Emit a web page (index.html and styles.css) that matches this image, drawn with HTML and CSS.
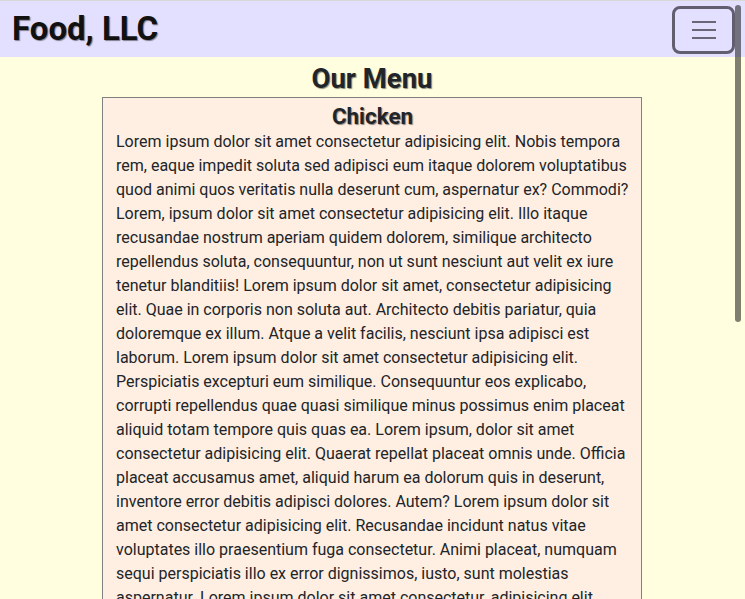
FILE: index.html
```html
<!DOCTYPE html>
<html lang="en">
<head>
<meta charset="utf-8">
<title>Food, LLC</title>
<link rel="stylesheet" href="styles.css">
</head>
<body>
<header class="navbar">
  <h1 class="brand">Food, LLC</h1>
  <button class="toggler" type="button" aria-label="Toggle navigation">
    <svg class="toggler-icon" width="24" height="20" viewBox="0 0 24 20">
      <path d="M0 2h24M0 10h24M0 18h24" stroke="#6b6778" stroke-width="2" fill="none"/>
    </svg>
  </button>
</header>
<main class="menu">
  <h2 class="menu-title">Our Menu</h2>
  <section class="card">
    <h3 class="card-title">Chicken</h3>
    <p class="card-text">Lorem ipsum dolor sit amet consectetur adipisicing elit. Nobis tempora rem, eaque impedit soluta sed adipisci eum itaque dolorem voluptatibus quod animi quos veritatis nulla deserunt cum, aspernatur ex? Commodi? Lorem, ipsum dolor sit amet consectetur adipisicing elit. Illo itaque recusandae nostrum aperiam quidem dolorem, similique architecto repellendus soluta, consequuntur, non ut sunt nesciunt aut velit ex iure tenetur blanditiis! Lorem ipsum dolor sit amet, consectetur adipisicing elit. Quae in corporis non soluta aut. Architecto debitis pariatur, quia doloremque ex illum. Atque a velit facilis, nesciunt ipsa adipisci est laborum. Lorem ipsum dolor sit amet consectetur adipisicing elit. Perspiciatis excepturi eum similique. Consequuntur eos explicabo, corrupti repellendus quae quasi similique minus possimus enim placeat aliquid totam tempore quis quas ea. Lorem ipsum, dolor sit amet consectetur adipisicing elit. Quaerat repellat placeat omnis unde. Officia placeat accusamus amet, aliquid harum ea dolorum quis in deserunt, inventore error debitis adipisci dolores. Autem? Lorem ipsum dolor sit amet consectetur adipisicing elit. Recusandae incidunt natus vitae voluptates illo praesentium fuga consectetur. Animi placeat, numquam sequi perspiciatis illo ex error dignissimos, iusto, sunt molestias aspernatur. Lorem ipsum dolor sit amet consectetur, adipisicing elit. Dolores, nam. Quibusdam, voluptatem. Sunt, expedita.</p>
  </section>
</main>
<div class="scroll-thumb"></div>
</body>
</html>
```
FILE: styles.css
```css
html, body {
  height: 100%;
  overflow: hidden;
}
body {
  margin: 0;
  background: #ffffe0;
  font-family: Roboto, "Liberation Sans", sans-serif;
  color: #212529;
  border-top: 1px solid #d8d8d8;
  box-sizing: border-box;
}
.navbar {
  display: flex;
  align-items: center;
  justify-content: space-between;
  height: 56px;
  padding: 0 10px 0 12px;
  background: #e3e0ff;
}
.brand {
  margin: 0;
  font-size: 33px;
  font-weight: 700;
  line-height: 1.2;
  color: #111;
  text-shadow: 1px 1px 1px rgba(0, 0, 0, 0.45);
}
.toggler {
  display: flex;
  align-items: center;
  justify-content: center;
  width: 63px;
  height: 48px;
  margin-top: 2px;
  padding: 0;
  background: transparent;
  border: 3px solid #625e70;
  border-radius: 8px;
}
.menu {
  padding: 5px 1px 0 0;
}
.menu-title {
  margin: 0 0 2px;
  text-align: center;
  font-size: 27.5px;
  font-weight: 700;
  line-height: 1.2;
  text-shadow: 1px 1px 1px rgba(0, 0, 0, 0.45);
}
.card {
  width: 540px;
  box-sizing: border-box;
  margin: 0 auto;
  padding: 5px 12px 12px 13px;
  background: #ffeee2;
  border: 1px solid #808080;
}
.card-title {
  margin: 0;
  text-align: center;
  font-size: 22.4px;
  font-weight: 700;
  line-height: 1.2;
  text-shadow: 1px 1px 1px rgba(0, 0, 0, 0.45);
}
.card-text {
  margin: 0;
  font-size: 16px;
  line-height: 24px;
}
.scroll-thumb {
  position: fixed;
  top: 5px;
  right: 4px;
  width: 6px;
  height: 317px;
  border-radius: 3px;
  background: rgba(0, 0, 0, 0.5);
}
```
